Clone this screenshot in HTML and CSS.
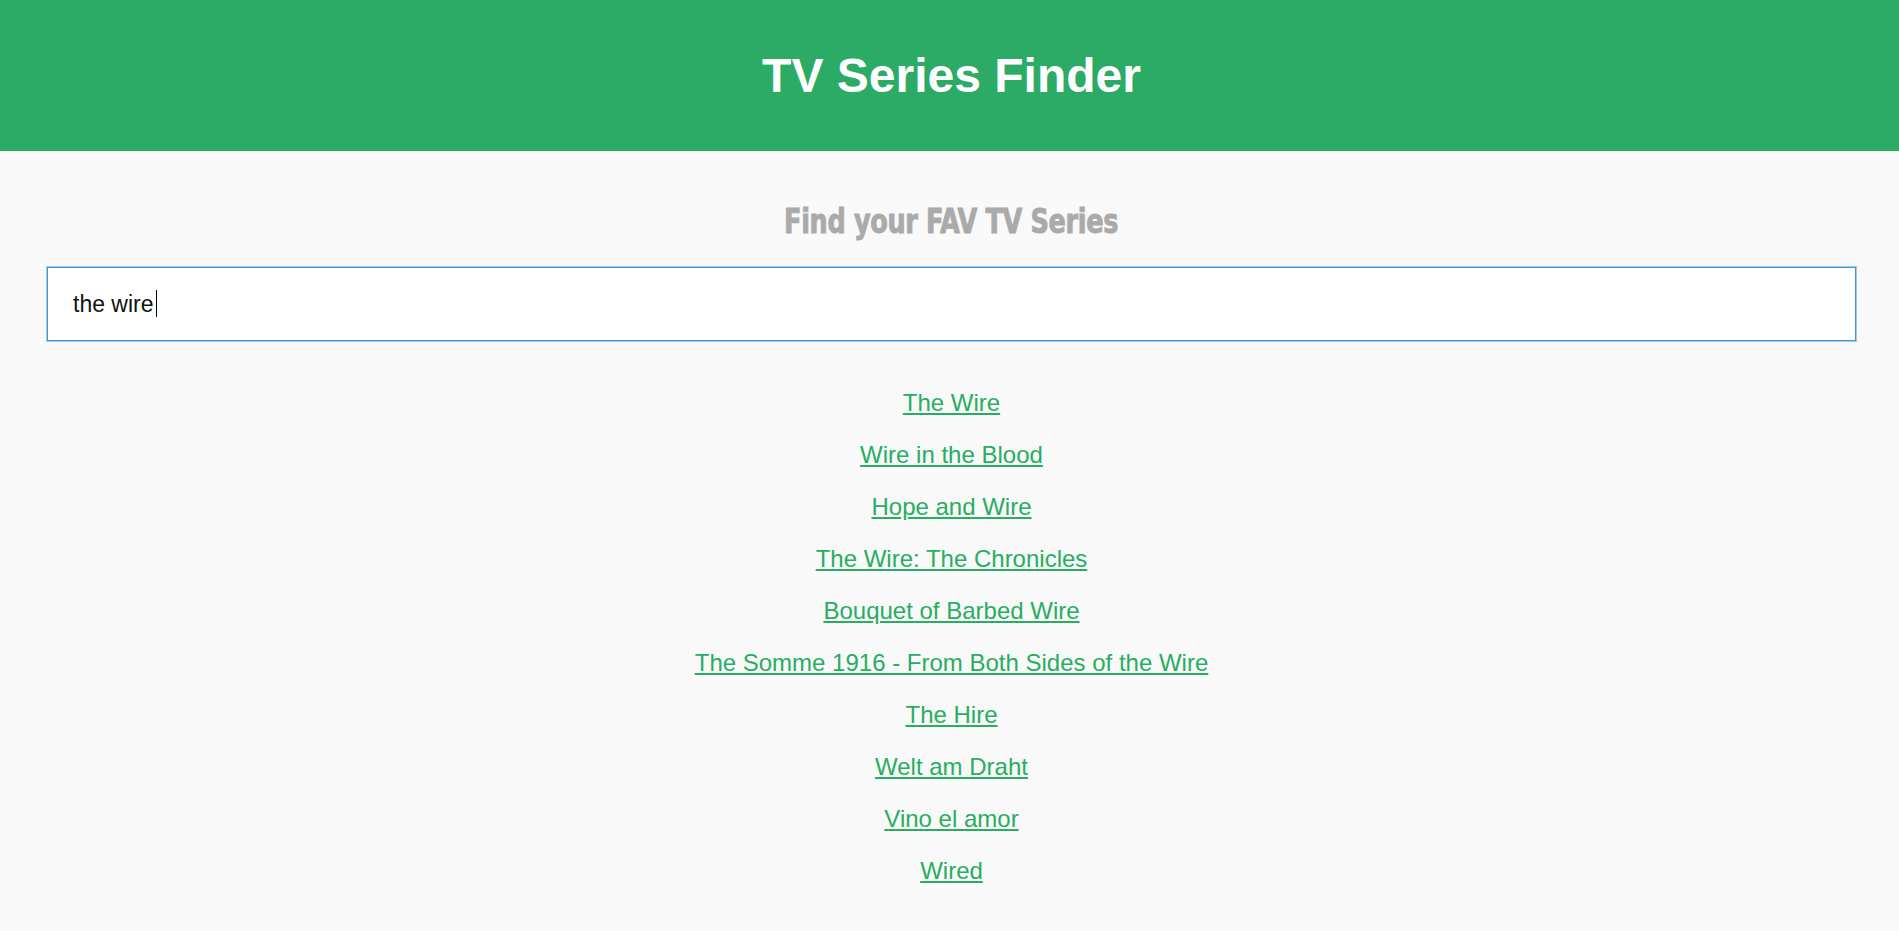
FILE: index.html
```html
<!DOCTYPE html>
<html lang="en">
<head>
<meta charset="utf-8">
<title>TV Series Finder</title>
<link rel="stylesheet" href="styles.css">
</head>
<body>
<header class="site-header">
  <h1 class="site-title">TV Series Finder</h1>
</header>
<main class="finder">
  <h2 class="finder-subtitle"><span class="finder-subtitle-text">Find your FAV TV Series</span></h2>
  <div class="search-box">
    <input class="search-input" type="text" value="the wire">
    <span class="search-caret"></span>
  </div>
  <ul class="results">
    <li class="result"><a class="result-link" href="#">The Wire</a></li>
    <li class="result"><a class="result-link" href="#">Wire in the Blood</a></li>
    <li class="result"><a class="result-link" href="#">Hope and Wire</a></li>
    <li class="result"><a class="result-link" href="#">The Wire: The Chronicles</a></li>
    <li class="result"><a class="result-link" href="#">Bouquet of Barbed Wire</a></li>
    <li class="result"><a class="result-link" href="#">The Somme 1916 - From Both Sides of the Wire</a></li>
    <li class="result"><a class="result-link" href="#">The Hire</a></li>
    <li class="result"><a class="result-link" href="#">Welt am Draht</a></li>
    <li class="result"><a class="result-link" href="#">Vino el amor</a></li>
    <li class="result"><a class="result-link" href="#">Wired</a></li>
  </ul>
</main>
</body>
</html>
```
FILE: styles.css
```css
html, body {
  margin: 0;
  padding: 0;
}

body {
  background: #f9f9f9;
  font-family: "Liberation Sans", Arial, sans-serif;
  color: #111;
}

.site-header {
  height: 151px;
  padding: 0 43px 0 47px;
  background: #2cab66;
  display: flex;
  align-items: center;
  justify-content: center;
}

.site-title {
  margin: 0;
  color: #ffffff;
  font-size: 48px;
  font-weight: bold;
  line-height: 56px;
}

.finder {
  padding: 50px 43px 40px 47px;
  display: flex;
  flex-direction: column;
}

.finder-subtitle {
  margin: 0 0 26px 0;
  text-align: center;
  line-height: 40px;
  height: 40px;
}

.finder-subtitle-text {
  display: inline-block;
  font-family: "DejaVu Sans Condensed", "DejaVu Sans", sans-serif;
  font-stretch: condensed;
  font-weight: bold;
  font-size: 34px;
  color: #aaaaaa;
  -webkit-text-stroke: 0.9px #aaaaaa;
  transform: scaleX(0.835);
  letter-spacing: -0.4px;
}

.search-box {
  position: relative;
}

.search-input {
  display: block;
  width: 100%;
  height: 74px;
  box-sizing: border-box;
  margin: 0;
  padding: 0 25px;
  background: #ffffff;
  border: 1px solid #3f97cf;
  box-shadow: 0 0 0 1px rgba(90, 165, 230, 0.55);
  outline: none;
  font-family: "Liberation Sans", Arial, sans-serif;
  font-size: 23px;
  color: #111;
  border-radius: 0;
}

.search-caret {
  position: absolute;
  left: 109px;
  top: 23px;
  width: 1px;
  height: 27px;
  background: #000;
}

.results {
  list-style: none;
  margin: 48px 0 0 0;
  padding: 0;
  display: flex;
  flex-direction: column;
  align-items: center;
  gap: 24px;
}

.result {
  line-height: 28px;
  font-size: 24px;
}

.result-link {
  color: #27ae60;
  text-decoration: underline;
}
```
